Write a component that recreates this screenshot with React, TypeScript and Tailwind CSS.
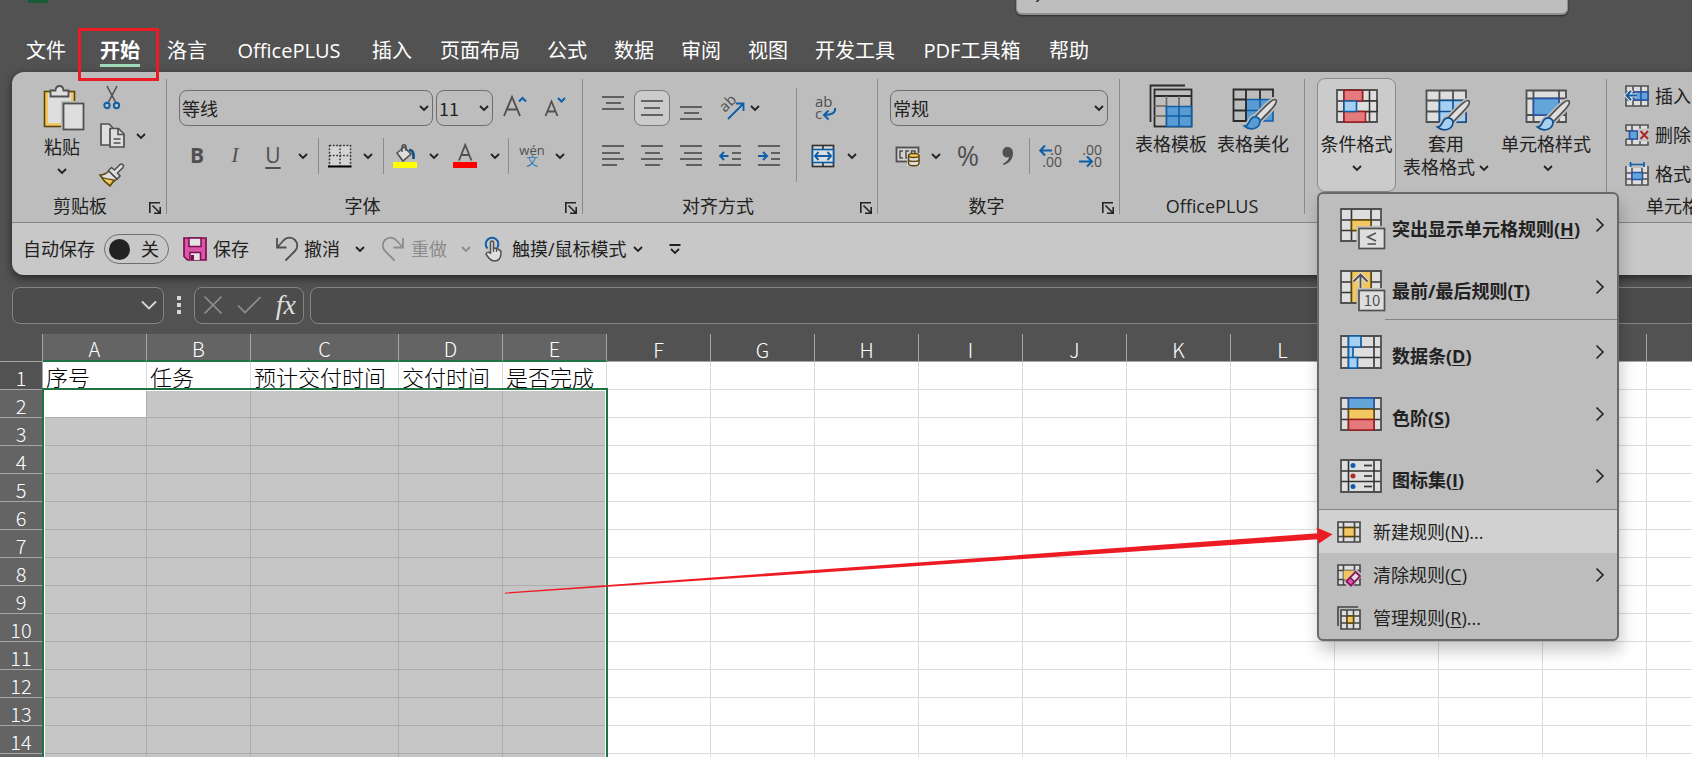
import React from "react";

type Kids = { children?: React.ReactNode };

const INK = "#505050";
const BLUE = "#0f5fa8";
const CELL = "#dedede";

/* ---------- small glyphs ---------- */

function Chevron({ color = "#222222" }: { color?: string }) {
  return (
    <svg width="10" height="8" viewBox="0 0 10 8" fill="none" className="shrink-0">
      <path d="M1 2l4 4 4-4" stroke={color} strokeWidth="1.8" />
    </svg>
  );
}

function Launcher() {
  return (
    <svg width="14" height="14" viewBox="0 0 14 14" fill="none" stroke="#222222" strokeWidth="1.6">
      <path d="M1.8 12V1.8H12M4.5 4.5l7 7M12.2 6v6.2H6" />
    </svg>
  );
}

function Svg({ w, h, children }: Kids & { w: number; h: number }) {
  return (
    <svg width={w} height={h} viewBox={`0 0 ${w} ${h}`} fill="none" className="shrink-0 overflow-visible">
      {children}
    </svg>
  );
}

function HLines({ rows, color = INK }: { rows: number[][]; color?: string }) {
  return (
    <>
      {rows.map(([y, a, b], i) => (
        <path key={i} d={`M${a} ${y}H${b}`} stroke={color} strokeWidth="1.7" />
      ))}
    </>
  );
}

function AlignIcon({ rows, arrow }: { rows: number[][]; arrow?: "left" | "right" }) {
  return (
    <Svg w={22} h={24}>
      <HLines rows={rows} />
      {arrow === "left" && <path d="M9.5 12H1.5M5 8L1.2 12 5 16" stroke={BLUE} strokeWidth="2" />}
      {arrow === "right" && <path d="M0 12h8.500M5 8l4 4-4 4" stroke={BLUE} strokeWidth="2" />}
    </Svg>
  );
}

/* ---------- ribbon icons ---------- */

function PasteIcon() {
  return (
    <Svg w={42} h={46}>
      <rect x="1.500" y="7.500" width="30" height="35" fill="#f2c661" stroke="#5c4508" strokeWidth="1.600" />
      <rect x="5" y="9" width="23" height="30" fill={CELL} />
      <path d="M7.500 12.500V6.500h5C13 .5 20 .5 20.500 6.500h5v6z" fill={CELL} stroke={INK} strokeWidth="1.800" />
      <rect x="18" y="17" width="24" height="29" fill="#bdbdbd" />
      <rect x="20.500" y="19.500" width="20" height="26" fill={CELL} stroke={INK} strokeWidth="1.800" />
    </Svg>
  );
}

function CutIcon() {
  return (
    <Svg w={18} h={24}>
      <path d="M4 1l9 17M14 1L5 18" stroke={INK} strokeWidth="1.600" />
      <circle cx="4" cy="20.500" r="2.700" stroke={BLUE} strokeWidth="1.900" />
      <circle cx="13.500" cy="20.500" r="2.700" stroke={BLUE} strokeWidth="1.900" />
    </Svg>
  );
}

function CopyIcon() {
  return (
    <Svg w={26} h={26}>
      <path d="M9 22H1V1h8l4 4" fill={CELL} stroke={INK} strokeWidth="1.700" />
      <path d="M10 5.500h8.500L24 11v13H10z" fill={CELL} stroke={INK} strokeWidth="1.700" />
      <path d="M18 5.500V11.500h6M13.500 16h7M13.500 20h7" stroke={INK} strokeWidth="1.600" />
    </Svg>
  );
}

function PainterIcon() {
  return (
    <Svg w={26} h={24}>
      <path d="M1 12c4 0 6-1 9-4l8 8c-3 2-5 4-7 7C7 20 4 17 1 12z" fill={CELL} stroke="#5c4508" strokeWidth="1.500" />
      <path d="M3 14.500c6 2 9 2 12 2.500l-4 5.500C7 20 5 18 3 14.500z" fill="#f2c661" stroke="#5c4508" strokeWidth="1.200" />
      <path d="M9.500 7.500l3-3 3 2.500L21 1.500c2-1.500 4.500 1 3 3L18.500 10l2.500 3-3 3z" fill={CELL} stroke={INK} strokeWidth="1.600" />
    </Svg>
  );
}

function BorderIcon() {
  return (
    <Svg w={24} h={24}>
      <rect x="2" y="2" width="20" height="19" fill={CELL} opacity=".7" />
      <path d="M1.500 1v21M12 1v21M22.500 1v21M1.500 1.500h21M1.500 11.500h21" stroke="#333333" strokeWidth="1.500" strokeDasharray="1.700 1.700" />
      <path d="M0 22.500h23.500" stroke="#000000" strokeWidth="2" />
    </Svg>
  );
}

function FillIcon() {
  return (
    <Svg w={24} h={24}>
      <path d="M4 9L11 3l7 7-8 7z" fill={CELL} stroke={INK} strokeWidth="1.600" />
      <path d="M9 8V3c0-3 4-3 4 0v4" stroke={INK} strokeWidth="1.500" />
      <path d="M16 6c4 0 5 3 4.500 9" stroke="#124f86" strokeWidth="2.600" />
      <rect y="18" width="24" height="6" fill="#ffff00" />
    </Svg>
  );
}

function FontColorIcon() {
  return (
    <Svg w={24} h={24}>
      <path d="M6 16.500L12.200 1 18.500 16.500M8.300 11h8" stroke={INK} strokeWidth="1.800" />
      <rect y="18" width="24" height="6" fill="#ff0000" />
    </Svg>
  );
}

function GrowIcon({ down = false }: { down?: boolean }) {
  return (
    <Svg w={24} h={24}>
      {down ? (
        <>
          <path d="M1.500 20L7.500 5.500l6 14.500M3.500 15.500h8" stroke={INK} strokeWidth="1.800" />
          <path d="M14 2l3.500 3.500L21 2" stroke={BLUE} strokeWidth="2" />
        </>
      ) : (
        <>
          <path d="M1 20L9 1l8 19M4 13.500h10" stroke={INK} strokeWidth="1.900" />
          <path d="M16 5.500L19.500 2 23 5.500" stroke={BLUE} strokeWidth="2" />
        </>
      )}
    </Svg>
  );
}

function OrientIcon() {
  return (
    <Svg w={26} h={26}>
      <text x="0" y="0" transform="translate(6 18) rotate(-45)" fontSize="15" fontFamily="Open Sans" fill={INK}>
        ab
      </text>
      <path d="M9 24L24 9M17 8.500h7.500V16" stroke={BLUE} strokeWidth="1.900" />
    </Svg>
  );
}

function WrapIcon() {
  return (
    <Svg w={24} h={26}>
      <text x="1" y="12" fontSize="15" fontFamily="Open Sans" fill={INK}>
        ab
      </text>
      <text x="1" y="24" fontSize="15" fontFamily="Open Sans" fill={INK}>
        c
      </text>
      <path d="M21 13c1 5-4 7-10 7M14.500 15.500L10 20l4.500 4.500" stroke={BLUE} strokeWidth="2" />
    </Svg>
  );
}

function MergeIcon() {
  return (
    <Svg w={24} h={24}>
      <rect x="1.500" y="1.500" width="21" height="21" fill={CELL} stroke="#333333" strokeWidth="1.700" />
      <path d="M12 1v5M12 18v5" stroke="#333333" strokeWidth="1.700" />
      <rect x="1.500" y="5.500" width="21" height="13" fill={CELL} stroke={BLUE} strokeWidth="1.700" />
      <path d="M4 12h16M7.500 8L4 12l3.500 4M16.500 8l3.500 4-3.500 4" stroke={BLUE} strokeWidth="1.900" />
    </Svg>
  );
}

function CurrencyIcon() {
  return (
    <Svg w={26} h={22}>
      <rect x="1.500" y="2.500" width="22" height="14" fill="#d2d2d2" stroke={INK} strokeWidth="1.800" />
      <path d="M8 6H5v7h3M14 13h-3V6h3M20 10V6h-3.500v4" stroke={INK} strokeWidth="1.500" />
      <path d="M12 8h13v13H12z" fill={CELL} />
      <path d="M13.500 10.500v8c0 3 10.500 3 10.500 0v-8" fill={CELL} stroke="#5c4508" strokeWidth="1.500" />
      <ellipse cx="18.800" cy="10.500" rx="5.300" ry="2" fill="#f2c661" stroke="#5c4508" strokeWidth="1.400" />
      <path d="M13.500 14.500c0 2.500 10.500 2.500 10.500 0" stroke="#5c4508" strokeWidth="1.400" />
    </Svg>
  );
}

function CommaIcon() {
  return (
    <Svg w={14} h={20}>
      <path d="M6.500 1C10 1 12 3.500 12 7.500c0 5-3.500 10-9.500 11.500l-.500-1.500c3-1 5.500-3.500 6-6.500C4 12.500 1.500 10 1.500 6.500 1.500 3 3.500 1 6.500 1z" fill={INK} />
    </Svg>
  );
}

function DecimalIcon({ more = false }: { more?: boolean }) {
  return (
    <Svg w={24} h={26}>
      <g fontSize="14" fontFamily="Open Sans" fill={INK} textAnchor="end">
        <text x="23" y="11.500">{more ? ".0" : ".00"}</text>
        <text x="23" y="24">{more ? ".00" : ".0"}</text>
      </g>
      {more ? (
        <path d="M13 7.500H1.500M6 2.500L1.200 7.500 6 12.500" stroke={BLUE} strokeWidth="2" />
      ) : (
        <path d="M0 18.500h12.500M8 13.500l5 5-5 5" stroke={BLUE} strokeWidth="2" />
      )}
    </Svg>
  );
}

function Brush({ tip = "#a6d0f2", edge = "#0f4f8c" }: { tip?: string; edge?: string }) {
  const handle = "M44 12c-2-2-7 2-21 17l4.500 4.500C41 20 46 15 44 12z";
  const head = "M12.500 38c5 0 4-6 8-8.500 4-2 8 1 7.500 4.500-1 7-10 9-15.500 4z";
  return (
    <>
      <path d={handle} stroke="#bdbdbd" strokeWidth="5" />
      <path d={head} stroke="#bdbdbd" strokeWidth="5" />
      <path d={handle} fill={CELL} stroke={INK} strokeWidth="1.700" />
      <path d={head} fill={tip} stroke={edge} strokeWidth="1.700" />
    </>
  );
}

function TemplateIcon() {
  return (
    <Svg w={44} h={44}>
      <path d="M1.500 38V1.500H36" stroke="#2b2b2b" strokeWidth="1.800" />
      <rect x="5.500" y="5.500" width="37" height="37" stroke="#2b2b2b" strokeWidth="1.800" />
      <path d="M5 12h37" stroke="#2b2b2b" strokeWidth="1.800" />
      <path d="M17.500 12v10M30 12v10M5 22h13M5 32h13M17.500 22v20" stroke="#6b635c" strokeWidth="1.600" />
      <path d="M17.500 22.500h25v20h-25zM30 22v20M17 32h25" fill="#5a9bd2" stroke="#0f5fa8" strokeWidth="1.600" />
    </Svg>
  );
}

function BeautifyIcon() {
  return (
    <Svg w={46} h={42}>
      <rect x="14" y="11" width="27" height="22" fill="#5a9bd2" />
      <path d="M14.500 11.500H41M14 22.500h27M28 11v22M41 11v22H14V11" stroke="#0f5fa8" strokeWidth="1.600" />
      <path d="M41 9V1.500H1.500V33H14V1.500M28 1v10M1 11.500h13M1 22.500h13" stroke="#2b2b2b" strokeWidth="1.800" />
      <Brush tip="#5a9bd2" edge="#0f5fa8" />
    </Svg>
  );
}

function FormatTableIcon() {
  return (
    <Svg w={46} h={42}>
      <path d="M1.500 1.500H41V33H1.500zM14.500 1v32M28 1v32M1 11.500h40M1 22.500h40" fill={CELL} stroke={INK} strokeWidth="1.800" />
      <path d="M14.500 11.500H41V33H14.500zM28 11v22M14 22.500h27" fill="#a6d0f2" stroke="#0f4f8c" strokeWidth="1.600" />
      <Brush />
    </Svg>
  );
}

function CellStyleIcon() {
  return (
    <Svg w={46} h={42}>
      <path d="M1.500 1.500H41V33H1.500zM8.500 1v32M34 1v32M1 9.500h40M1 26h40" fill={CELL} stroke={INK} strokeWidth="1.800" />
      <rect x="8.500" y="9.500" width="25.500" height="16.500" fill="#62a5d9" stroke="#2b50a8" strokeWidth="1.600" />
      <Brush />
    </Svg>
  );
}

function Frame({ v, children }: Kids & { v: number[] }) {
  return (
    <>
      <rect x="1" y="1" width="40" height="32" fill={CELL} />
      <path d={`${v.map((x) => `M${x} 1v32`).join("")}M1 12h40M1 22.500h40`} stroke="#333333" strokeWidth="1.600" />
      {children}
      <path d="M1 1h40v32H1z" stroke={INK} strokeWidth="1.800" />
    </>
  );
}

function ConditionalIcon() {
  return (
    <Svg w={42} h={42}>
      <Frame v={[8, 26.5, 33.5]} />
      <path d="M8 12h33v10.500H8z" fill={CELL} stroke="#333333" strokeWidth="1.500" />
      <path d="M33.500 12v10.500" stroke="#333333" strokeWidth="1.500" />
      <path d="M8 1.200h18.500V12H8zM8 22.500h21.500V33H8z" fill="#e47a7c" stroke="#9c1c20" strokeWidth="1.500" />
      <path d="M8 12h12.500v10.500H8z" fill="#a6d0f2" stroke="#0f5fa8" strokeWidth="1.600" />
    </Svg>
  );
}

function Badge({ children }: Kids) {
  return (
    <>
      <rect x="16.500" y="18" width="30" height="24" fill="#bdbdbd" />
      <rect x="19" y="20.500" width="25.500" height="20" fill={CELL} stroke={INK} strokeWidth="1.700" />
      {children}
    </>
  );
}

function HighlightIcon() {
  return (
    <Svg w={46} h={42}>
      <Frame v={[11.5, 31]}>
        <path d="M11.500 12H31v10.500H11.500z" fill="#f2c661" stroke="#5c4508" strokeWidth="1.500" />
      </Frame>
      <Badge>
        <path d="M36 25l-8.500 4 8.500 4M27.500 36H36" stroke={INK} strokeWidth="1.500" />
      </Badge>
    </Svg>
  );
}

function TopIcon() {
  return (
    <Svg w={46} h={42}>
      <Frame v={[11.5, 31]}>
        <path d="M11.500 1H31v32H11.500z" fill="#f2c661" stroke="#5c4508" strokeWidth="1.500" />
        <path d="M20.500 21V5M13.500 11.500l7-7 7 7" stroke="#dedede" strokeWidth="4" />
        <path d="M20.500 21V5M13.500 11.500l7-7 7 7" stroke={INK} strokeWidth="1.800" />
      </Frame>
      <Badge>
        <text x="32" y="36" textAnchor="middle" fontSize="15" fontWeight="400" fontFamily="Noto Sans CJK SC" fill={INK}>
          10
        </text>
      </Badge>
    </Svg>
  );
}

function DataBarIcon() {
  return (
    <Svg w={42} h={34}>
      <Frame v={[8.5, 34]} />
      <path d="M8.500 1H21v11H8.500zM8.500 12h4.500v10.500H8.500zM8.500 22.500h9V33h-9z" fill="#a6d0f2" stroke="#0f5fa8" strokeWidth="1.700" />
    </Svg>
  );
}

function ScaleIcon() {
  return (
    <Svg w={42} h={34}>
      <Frame v={[8.5, 34]} />
      <path d="M8.500 1H34v11H8.500z" fill="#62a5d9" stroke="#2b50a8" strokeWidth="1.600" />
      <path d="M8.500 12H34v10.500H8.500z" fill="#f2c661" stroke="#5c4508" strokeWidth="1.400" />
      <path d="M8.500 22.500H34V33H8.500z" fill="#e47a7c" stroke="#9c1c20" strokeWidth="1.600" />
    </Svg>
  );
}

function IconSetIcon() {
  return (
    <Svg w={42} h={34}>
      <Frame v={[8.5, 34]} />
      <circle cx="13" cy="6.500" r="2.500" fill={BLUE} />
      <circle cx="13" cy="17" r="2.500" fill="#a82a2a" />
      <circle cx="13" cy="27.500" r="2.500" fill={BLUE} />
      <HLines rows={[[6.5, 24, 32], [17, 24, 32], [27.5, 24, 32]]} color="#333333" />
    </Svg>
  );
}

function NewRuleIcon() {
  return (
    <Svg w={24} h={22}>
      <path d="M1 1h22v20H1zM6.500 1v20M17.500 1v20M1 6.500h22M1 15.500h22" fill={CELL} stroke="#444444" strokeWidth="1.600" />
      <path d="M6.500 6.500h11v9h-11z" fill="#f2c661" stroke="#5c4508" strokeWidth="1.500" />
    </Svg>
  );
}

function ClearRuleIcon() {
  return (
    <Svg w={26} h={24}>
      <path d="M1 2h22v20H1zM6.500 2v20M17.500 2v20M1 7.500h22M1 16.500h22" fill={CELL} stroke="#444444" strokeWidth="1.600" />
      <path d="M6.500 7.500h11v9h-11z" fill="#f2c661" />
      <path d="M19 6l7 6-11 12H9V17z" fill="#bdbdbd" />
      <path d="M18.500 9l4.500 4-9 9.500-4.500-4z" fill={CELL} stroke="#8a0f5c" strokeWidth="1.700" />
      <path d="M13 14.500l4.500 4-3.500 4-4.500-4z" fill="#d957a8" stroke="#8a0f5c" strokeWidth="1.500" />
    </Svg>
  );
}

function ManageRuleIcon() {
  return (
    <Svg w={24} h={24}>
      <path d="M1 20V1h20" stroke="#444444" strokeWidth="1.600" />
      <path d="M4 4h19v19H4zM10 4v19M16.500 4v19M4 10h19M4 17h19" fill={CELL} stroke="#444444" strokeWidth="1.600" />
      <path d="M10 10h6.500v7H10z" fill="#f2c661" stroke="#5c4508" strokeWidth="1.500" />
    </Svg>
  );
}

function InsertIcon() {
  return (
    <Svg w={24} h={24}>
      <path d="M1 2h22v20H1zM8 2v20M16 2v20M1 8h22M1 16h22" fill={CELL} stroke={INK} strokeWidth="1.600" />
      <path d="M9 8h14v8H9zM16 8v8" fill="#62a5d9" stroke="#2b50a8" strokeWidth="1.600" />
      <path d="M12 11.500H2M7 6l-5.500 5.500L7 17" stroke={CELL} strokeWidth="4" />
      <path d="M12 11.500H2M6 7l-4.500 4.500L6 16" stroke={BLUE} strokeWidth="1.900" />
    </Svg>
  );
}

function DeleteIcon() {
  return (
    <Svg w={24} h={24}>
      <path d="M1 8V2h22v5M7 2v6M15 2v5M1 8h8M1 16v6h22v-4M7 16v6M15 16v6M1 16h8" fill={CELL} stroke={INK} strokeWidth="1.600" />
      <path d="M4.500 8h8v8h-8z" fill="#62a5d9" stroke="#2b50a8" strokeWidth="1.600" />
      <path d="M13 5.500h11v13H13z" fill="#c6c6c6" />
      <path d="M15.500 8l7.500 8M23 8l-7.500 8" stroke="#a82a2a" strokeWidth="2" />
    </Svg>
  );
}

function FormatIcon() {
  return (
    <Svg w={24} h={24}>
      <path d="M1 4v19h22V4M1 11h22M1 17h22M7 6v17M17 6v17" fill={CELL} stroke={INK} strokeWidth="1.600" />
      <path d="M6 0h12v6H6z" fill="#bdbdbd" />
      <path d="M5.500 0v5M19 0v5M5.500 2.500H19" stroke={BLUE} strokeWidth="1.700" />
      <path d="M7 10.500h10.500v7H7z" fill="#62a5d9" stroke="#2b50a8" strokeWidth="1.500" />
    </Svg>
  );
}

function SaveIcon() {
  return (
    <Svg w={24} h={24}>
      <path d="M1 1h22v22H4.500L1 19.500z" fill="#d957a8" stroke="#7d0d50" strokeWidth="1.700" />
      <path d="M6 1h12v8.500H6zM7 23v-7.500h10.500V23" fill="#e4e4e4" stroke="#7d0d50" strokeWidth="1.500" />
      <path d="M9.500 18v5" stroke="#7d0d50" strokeWidth="3" />
    </Svg>
  );
}

function UndoIcon({ redo = false }: { redo?: boolean }) {
  return (
    <Svg w={24} h={26}>
      <g transform={redo ? "translate(24 0) scale(-1 1)" : undefined} stroke={redo ? "#8c8c8c" : INK} strokeWidth="1.800">
        <path d="M2 2v9.500h9.500M2.500 11L8 5c4-4.500 9-4 12-1s3 8 0 11l-9.500 9.500" />
      </g>
    </Svg>
  );
}

function TouchIcon() {
  return (
    <Svg w={18} h={26}>
      <path d="M3.500 12.500A6.300 6.300 0 1 1 13 12" stroke="#0f5fa8" strokeWidth="2" />
      <path
        d="M6.500 17V6.500c0-2 3-2 3 0V12c2-.500 2.500.500 3 1 2-.500 2.500.500 2.500 1 2 0 2 1 2 2.500 0 5-1.500 8.500-6.500 8.500-4 0-6-3-8.500-7 .500-2 2.500-2 4.500-1z"
        fill={CELL}
        stroke={INK}
        strokeWidth="1.500"
      />
      <path d="M9.500 12v4M12.500 13v3" stroke={INK} strokeWidth="1.300" />
    </Svg>
  );
}

/* ---------- ribbon building blocks ---------- */

function Tool({ label, width = "w-9", children }: Kids & { label: string; width?: string }) {
  return (
    <button aria-label={label} className={`flex h-9 shrink-0 items-center justify-center ${width}`}>
      {children}
    </button>
  );
}

function More({ width = "w-[22px]", label }: { width?: string; label: string }) {
  return (
    <Tool label={label} width={width}>
      <Chevron />
    </Tool>
  );
}

function Divider() {
  return <div className="mx-[3px] h-9 w-px shrink-0 bg-[#8a8a8a]" />;
}

function Group({
  title,
  width,
  launcher = true,
  wide = false,
  children,
}: Kids & { title: string; width: string; launcher?: boolean; wide?: boolean }) {
  return (
    <>
      <section aria-label={title} className={`flex shrink-0 flex-col ${width}`}>
        <div className="h-[118px]">{children}</div>
        <div className="flex h-8 items-center">
          <h2 className={`flex-1 text-center text-[18px] leading-6 ${wide ? "pr-1.5" : ""}`}>{title}</h2>
          {launcher && (
            <button aria-label={`${title}设置`} className="mr-1 mt-1">
              <Launcher />
            </button>
          )}
        </div>
      </section>
      <div className="mt-[7px] h-[135px] w-px shrink-0 bg-[#8a8a8a]" />
    </>
  );
}

function Combo({ label, value, width, pad = "pl-0.5" }: { label: string; value: string; width: string; pad?: string }) {
  return (
    <div className={`grid h-9 shrink-0 items-center ${width}`}>
      <select
        aria-label={label}
        defaultValue={value}
        className={`col-start-1 row-start-1 h-9 w-full appearance-none rounded-lg border border-[#6e6e6e] bg-transparent font-['Noto_Sans_CJK_SC',sans-serif] text-[18px] text-[#222222] ${pad}`}
      >
        <option>{value}</option>
      </select>
      <span className="pointer-events-none col-start-1 row-start-1 mr-1 justify-self-end">
        <Chevron />
      </span>
    </div>
  );
}

function BigButton({ icon, width, iconBox, children }: Kids & { icon: React.ReactNode; width: string; iconBox: string }) {
  return (
    <button className={`flex shrink-0 flex-col items-center self-start text-[18px] leading-[23px] ${width}`}>
      <span className={`flex items-start justify-center ${iconBox}`}>{icon}</span>
      {children}
    </button>
  );
}

/* ---------- conditional formatting menu ---------- */

function MenuArrow() {
  return (
    <svg width="10" height="16" viewBox="0 0 10 16" fill="none" stroke="#222222" strokeWidth="1.600">
      <path d="M1.500 1.500L8 8l-6.500 6.500" />
    </svg>
  );
}

function Label({ text, hot, dots = false }: { text: string; hot: string; dots?: boolean }) {
  return (
    <>
      {text}(<u className="underline-offset-2">{hot}</u>){dots && "..."}
    </>
  );
}

const BIG_ITEMS = [
  { text: "突出显示单元格规则", hot: "H", icon: <HighlightIcon /> },
  { text: "最前/最后规则", hot: "T", icon: <TopIcon /> },
  { text: "数据条", hot: "D", icon: <DataBarIcon /> },
  { text: "色阶", hot: "S", icon: <ScaleIcon /> },
  { text: "图标集", hot: "I", icon: <IconSetIcon /> },
];

const SMALL_ITEMS = [
  { text: "新建规则", hot: "N", icon: <NewRuleIcon />, dots: true, active: true },
  { text: "清除规则", hot: "C", icon: <ClearRuleIcon />, arrow: true },
  { text: "管理规则", hot: "R", icon: <ManageRuleIcon />, dots: true },
];

function RulesMenu() {
  return (
    <div
      role="menu"
      className="absolute left-0 top-full w-[302px] rounded-md border-2 border-[#696969] bg-[#bdbdbd] text-[18px] text-[#222222] shadow-[2px_10px_16px_rgba(0,0,0,0.22)]"
    >
      {BIG_ITEMS.map((item, i) => (
        <React.Fragment key={item.hot}>
          <button role="menuitem" className="flex h-[62px] w-full items-center pl-[21px] pr-3 text-left font-bold">
            <span className="w-[52px] self-start pt-3.5">{item.icon}</span>
            <span className="flex-1 whitespace-nowrap pt-2 leading-6">
              <Label text={item.text} hot={item.hot} />
            </span>
            <MenuArrow />
          </button>
          {i === 1 && <div className="mb-px mt-px ml-[66px] h-px bg-[#858585]" />}
        </React.Fragment>
      ))}
      <div className="mt-0.5 h-px bg-[#858585]" />
      {SMALL_ITEMS.map((item) => (
        <button
          key={item.hot}
          role="menuitem"
          className={`flex h-[43px] w-full items-center pl-[18px] pr-3 text-left ${item.active ? "bg-[#d1d1d1]" : ""}`}
        >
          <span className="w-9">{item.icon}</span>
          <span className="flex-1 leading-6">
            <Label text={item.text} hot={item.hot} dots={item.dots} />
          </span>
          {item.arrow && <MenuArrow />}
        </button>
      ))}
    </div>
  );
}

/* ---------- page sections ---------- */

const TABS = [
  { text: "文件", width: "w-[68px]" },
  { text: "开始", width: "w-[80px]", active: true },
  { text: "洛言", width: "w-[54px]" },
  { text: "OfficePLUS", width: "w-[150px]" },
  { text: "插入", width: "w-[56px]" },
  { text: "页面布局", width: "w-[120px]" },
  { text: "公式", width: "w-[54px]" },
  { text: "数据", width: "w-[80px]" },
  { text: "审阅", width: "w-[54px]" },
  { text: "视图", width: "w-[80px]" },
  { text: "开发工具", width: "w-[94px]" },
  { text: "PDF工具箱", width: "w-[140px]" },
  { text: "帮助", width: "w-[54px]" },
];

function TopBar() {
  return (
    <header className="text-white">
      <div className="flex h-[26px] items-start">
        <div className="ml-7 h-[3px] w-5 bg-[#185c37]" />
        <div className="flex-1" />
        <div className="mr-[124px] grid w-[552px]">
          <input
            aria-label="搜索"
            className="col-start-1 row-start-1 h-[15px] w-full rounded-b-md border-x border-b-2 border-[#8f8f8f] bg-[#bdbdbd] shadow-[0_1px_2px_rgba(0,0,0,0.5)]"
          />
          <svg width="4" height="2" viewBox="0 0 4 2" className="pointer-events-none col-start-1 row-start-1 ml-5">
            <path d="M0 2L3 0" stroke="#333333" strokeWidth="1.500" />
          </svg>
        </div>
      </div>
      <nav className="flex h-[46px] items-stretch pl-3 text-[20px] leading-7">
        {TABS.map((tab) => (
          <button key={tab.text} className={`relative flex shrink-0 justify-center whitespace-nowrap pt-[11px] ${tab.width}`}>
            {tab.active ? (
              <>
                <span className="h-[30px] border-b-[3px] border-[#9fd9b8] font-bold">{tab.text}</span>
                <span className="absolute -bottom-[9px] left-0 z-30 h-[53px] w-[81px] -translate-x-0.5 border-[3px] border-[#ed1c24]" />
              </>
            ) : (
              tab.text
            )}
          </button>
        ))}
      </nav>
    </header>
  );
}

function Ribbon() {
  return (
    <div className="flex h-[150px] rounded-tl-xl bg-[#bdbdbd]">
      <Group title="剪贴板" width="w-[154px]">
        <div className="flex pl-[27px] pt-3">
          <button className="flex w-[46px] flex-col items-center text-[18px] leading-6">
            <span className="h-[46px] self-end">
              <PasteIcon />
            </span>
            <span className="mb-2 mt-[5px] whitespace-nowrap">粘贴</span>
            <Chevron />
          </button>
          <div className="ml-3 flex flex-col gap-3.5">
            <button aria-label="剪切" className="flex h-[25px] w-[30px] items-center justify-center">
              <CutIcon />
            </button>
            <button aria-label="复制" className="flex h-[25px] items-center gap-2.5 pl-[3px]">
              <CopyIcon />
              <Chevron />
            </button>
            <button aria-label="格式刷" className="flex h-[25px] w-[30px] items-center justify-center">
              <PainterIcon />
            </button>
          </div>
        </div>
      </Group>

      <Group title="字体" width="w-[415px]" wide>
        <div className="flex flex-col gap-3 pl-3 pt-[18px]">
          <div className="flex">
            <Combo label="字体名称" value="等线" width="w-[254px]" />
            <div className="w-[3px]" />
            <Combo label="字号" value="11" width="w-[57px]" />
            <Tool label="增大字号" width="w-11">
              <GrowIcon />
            </Tool>
            <Tool label="减小字号" width="w-[38px]">
              <GrowIcon down />
            </Tool>
          </div>
          <div className="flex text-[21px] text-[#505050]">
            <Tool label="加粗">
              <b>B</b>
            </Tool>
            <Tool label="倾斜" width="w-10">
              <i className="font-['Liberation_Serif',serif]">I</i>
            </Tool>
            <Tool label="下划线">
              <u className="underline-offset-4">U</u>
            </Tool>
            <More label="下划线选项" width="w-6" />
            <Divider />
            <Tool label="边框">
              <BorderIcon />
            </Tool>
            <More label="边框选项" width="w-5" />
            <div className="w-0.5" />
            <Divider />
            <Tool label="填充颜色">
              <FillIcon />
            </Tool>
            <More label="填充颜色选项" />
            <Tool label="字体颜色" width="w-10">
              <FontColorIcon />
            </Tool>
            <More label="字体颜色选项" width="w-5" />
            <Divider />
            <Tool label="拼音" width="w-10">
              <span className="flex flex-col items-center text-[13px] leading-3">
                wén<span className="text-[12px] text-[#2a7ab8]">文</span>
              </span>
            </Tool>
            <More label="拼音选项" width="w-4" />
          </div>
        </div>
      </Group>

      <Group title="对齐方式" width="w-[294px]" wide>
        <div className="flex pl-3">
          <div className="flex w-[201px] flex-col gap-3 pt-[18px]">
            <div className="flex gap-[3px]">
              <Tool label="顶端对齐">
                <AlignIcon rows={[[1, 0, 22], [7, 4, 19], [13, 0, 22]]} />
              </Tool>
              <button aria-label="垂直居中" className="flex size-9 items-center justify-center rounded-lg border border-[#7a7a7a] bg-[#cbcbcb]">
                <AlignIcon rows={[[5, 0, 22], [12, 3, 19], [19, 0, 22]]} />
              </button>
              <Tool label="底端对齐">
                <AlignIcon rows={[[11, 0, 22], [17, 4, 19], [23, 0, 22]]} />
              </Tool>
              <Tool label="方向" width="w-[50px]">
                <span className="flex w-9 justify-center">
                  <OrientIcon />
                </span>
                <Chevron />
              </Tool>
            </div>
            <div className="flex gap-[3px]">
              <Tool label="左对齐">
                <AlignIcon rows={[[2, 0, 22], [9, 0, 18], [15, 0, 22], [21, 0, 15]]} />
              </Tool>
              <Tool label="居中">
                <AlignIcon rows={[[2, 0, 22], [9, 4, 19], [15, 0, 22], [21, 4, 19]]} />
              </Tool>
              <Tool label="右对齐">
                <AlignIcon rows={[[2, 0, 22], [9, 4, 22], [15, 0, 22], [21, 6, 22]]} />
              </Tool>
              <Tool label="减少缩进量">
                <AlignIcon rows={[[2, 0, 22], [9, 13, 22], [15, 13, 22], [21, 0, 22]]} arrow="left" />
              </Tool>
              <Tool label="增加缩进量">
                <AlignIcon rows={[[2, 0, 22], [9, 13, 22], [15, 13, 22], [21, 0, 22]]} arrow="right" />
              </Tool>
            </div>
          </div>
          <div className="mt-4 h-[94px] w-px bg-[#8a8a8a]" />
          <div className="flex flex-col gap-3 pl-2 pt-[18px]">
            <Tool label="自动换行" width="w-[42px]">
              <WrapIcon />
            </Tool>
            <div className="flex">
              <Tool label="合并后居中">
                <MergeIcon />
              </Tool>
              <More label="合并选项" />
            </div>
          </div>
        </div>
      </Group>

      <Group title="数字" width="w-[241px]" wide>
        <div className="flex flex-col gap-3 pl-3 pt-[18px]">
          <Combo label="数字格式" value="常规" width="w-[218px]" />
          <div className="flex text-[27px] text-[#505050]">
            <Tool label="会计数字格式">
              <CurrencyIcon />
            </Tool>
            <More label="会计数字格式选项" width="w-5" />
            <Tool label="百分比样式" width="w-11">
              %
            </Tool>
            <Tool label="千位分隔样式">
              <CommaIcon />
            </Tool>
            <Divider />
            <Tool label="增加小数位数">
              <DecimalIcon more />
            </Tool>
            <Tool label="减少小数位数" width="w-11">
              <DecimalIcon />
            </Tool>
          </div>
        </div>
      </Group>

      <Group title="OfficePLUS" width="w-[184px]" launcher={false}>
        <div className="flex pl-2.5 pt-3">
          <BigButton width="w-[82px]" iconBox="h-[49px]" icon={<TemplateIcon />}>
            表格模板
          </BigButton>
          <BigButton width="w-[82px]" iconBox="h-[49px] pt-1 pl-1" icon={<BeautifyIcon />}>
            表格美化
          </BigButton>
        </div>
      </Group>

      <Group title="" width="w-[301px]" launcher={false}>
        <div className="flex items-start pl-3 pt-1.5">
          <div className="relative z-20">
            <button
              aria-expanded="true"
              className="flex h-[114px] w-[79px] flex-col items-center whitespace-nowrap rounded-lg border border-[#8a8a8a] bg-[#cbcbcb] pt-2.5 text-[18px] leading-[23px]"
            >
              <span className="h-11">
                <ConditionalIcon />
              </span>
              条件格式
              <span className="flex h-[23px] items-center">
                <Chevron />
              </span>
            </button>
            <RulesMenu />
          </div>
          <div className="flex pt-[11px]">
            <BigButton width="w-[100px]" iconBox="h-11 pl-1" icon={<FormatTableIcon />}>
              <span>套用</span>
              <span className="flex items-center gap-1 whitespace-nowrap">
                表格格式
                <Chevron />
              </span>
            </BigButton>
            <BigButton width="w-[100px]" iconBox="h-11 pl-1" icon={<CellStyleIcon />}>
              <span>单元格样式</span>
              <span className="flex h-[23px] items-center pl-1">
                <Chevron />
              </span>
            </BigButton>
          </div>
        </div>
      </Group>

      <Group title="单元格" width="w-[132px]" launcher={false}>
        <div className="flex flex-col gap-[15px] pl-[18px] pt-3 text-[18px] leading-6">
          <button className="flex items-center gap-1.5">
            <InsertIcon />
            插入
          </button>
          <button className="flex items-center gap-1.5">
            <DeleteIcon />
            删除
          </button>
          <button className="flex items-center gap-1.5">
            <FormatIcon />
            格式
          </button>
        </div>
      </Group>
    </div>
  );
}

function QuickAccess() {
  return (
    <div className="flex h-[53px] items-center whitespace-nowrap rounded-bl-xl border-t border-[#858585] bg-[#c8c8c8] pl-[11px] text-[18px] leading-6">
      <label htmlFor="autosave">自动保存</label>
      <div className="ml-[9px] grid items-center">
        <input
          id="autosave"
          type="checkbox"
          role="switch"
          className="col-start-1 row-start-1 h-[30px] w-[65px] appearance-none rounded-full border border-[#6e6e6e]"
        />
        <span className="pointer-events-none col-start-1 row-start-1 flex items-center justify-between pl-[5px] pr-2.5">
          <span className="size-[21px] rounded-full bg-[#222222]" />
          关
        </span>
      </div>
      <button className="ml-3.5 flex items-center gap-1.5">
        <SaveIcon />
        保存
      </button>
      <button className="ml-[26px] flex items-center gap-[5px]">
        <UndoIcon />
        撤消
      </button>
      <button aria-label="撤消选项" className="ml-[15px]">
        <Chevron />
      </button>
      <button disabled className="ml-4 flex items-center gap-1.5 text-[#8c8c8c]">
        <UndoIcon redo />
        重做
      </button>
      <button disabled aria-label="重做选项" className="ml-3.5">
        <Chevron color="#8c8c8c" />
      </button>
      <button className="ml-[13px] flex items-center">
        <TouchIcon />
        <span className="ml-2.5 mr-1.5">触摸/鼠标模式</span>
        <Chevron />
      </button>
      <button aria-label="自定义快速访问工具栏" className="ml-[26px]">
        <Svg w={12} h={12}>
          <path d="M.500 2h11M2 6l4 4 4-4" stroke="#222222" strokeWidth="1.800" />
        </Svg>
      </button>
    </div>
  );
}

function FormulaBar() {
  return (
    <div className="flex h-[59px] items-center pb-px pl-3 pt-0.5">
      <div className="grid w-[152px] shrink-0 items-center">
        <select aria-label="名称框" className="col-start-1 row-start-1 h-[37px] w-full appearance-none rounded-lg border border-[#858585] bg-[#4c4c4c]" />
        <span className="pointer-events-none col-start-1 row-start-1 mr-[7px] justify-self-end">
          <Svg w={16} h={10}>
            <path d="M1 1.500l7 7 7-7" stroke="#d6d6d6" strokeWidth="1.800" />
          </Svg>
        </span>
      </div>
      <div className="mx-[13px] flex w-1 shrink-0 flex-col gap-[3px]">
        <span className="size-1 bg-[#d6d6d6]" />
        <span className="size-1 bg-[#d6d6d6]" />
        <span className="size-1 bg-[#d6d6d6]" />
      </div>
      <div className="flex h-[37px] w-[110px] shrink-0 items-center justify-between rounded-lg border border-[#858585] bg-[#4c4c4c] pl-[9px] pr-[7px]">
        <button aria-label="取消">
          <Svg w={18} h={18}>
            <path d="M.500 .500l17 17M17.500 .500l-17 17" stroke="#8f8f8f" strokeWidth="1.700" />
          </Svg>
        </button>
        <button aria-label="输入">
          <Svg w={24} h={18}>
            <path d="M1 9.500l7 7L23.500 1" stroke="#8f8f8f" strokeWidth="1.700" />
          </Svg>
        </button>
        <button aria-label="插入函数" className="font-['Liberation_Serif',serif] text-[28px] italic leading-7 text-[#dedede]">
          fx
        </button>
      </div>
      <input
        aria-label="编辑栏"
        className="-mr-3 ml-1.5 h-[37px] min-w-0 flex-1 rounded-lg border border-[#858585] bg-[#4c4c4c] px-2 text-white"
      />
    </div>
  );
}

const COLUMNS = ["A", "B", "C", "D", "E", "F", "G", "H", "I", "J", "K", "L", "M", "N", "O", "P"];
const FIRST_ROW = ["序号", "任务", "预计交付时间", "交付时间", "是否完成"];
const ROWS = Array.from({ length: 15 }, (_, i) => i + 1);

function Sheet() {
  return (
    <main className="relative font-['Noto_Sans_CJK_SC',sans-serif] font-light">
      <table className="w-[1751px] table-fixed border-separate border-spacing-0 bg-white">
        <colgroup>
          <col className="w-[43px]" />
          {COLUMNS.map((c) => (
            <col key={c} className={c === "C" ? "w-[148px]" : "w-[104px]"} />
          ))}
        </colgroup>
        <thead>
          <tr className="h-7 text-[20px] leading-[22px] text-white">
            <td className="border-b border-r border-[#a6a6a6] bg-[#525252]" />
            {COLUMNS.map((c, i) => (
              <th
                key={c}
                scope="col"
                className={`h-7 border-r border-r-[#a6a6a6] p-0 pt-1 text-center font-light ${
                  i < 5 ? "border-b-2 border-b-[#217346] bg-[#646464]" : "border-b border-b-[#a6a6a6] bg-[#525252]"
                }`}
              >
                {c}
              </th>
            ))}
          </tr>
        </thead>
        <tbody>
          {ROWS.map((r) => (
            <tr key={r} className="h-7">
              <th
                scope="row"
                className={`h-7 border-b border-r border-[#a6a6a6] p-0 pt-1 text-center text-[20px] font-light leading-[22px] text-white ${
                  r > 1 ? "bg-[#646464]" : "bg-[#525252]"
                }`}
              >
                {r}
              </th>
              {COLUMNS.map((c, i) => {
                const selected = r > 1 && i < 5;
                const first = r === 2 && i === 0;
                return (
                  <td
                    key={c}
                    className={`h-7 whitespace-nowrap border-b border-r p-0 pl-[3px] text-[22px] leading-[22px] text-black ${
                      selected ? "border-[#adadad]" : "border-[#dcdcdc]"
                    } ${selected && !first ? "bg-[#c6c6c6]" : ""}`}
                  >
                    {r === 1 ? FIRST_ROW[i] : null}
                  </td>
                );
              })}
            </tr>
          ))}
        </tbody>
      </table>
      <div className="pointer-events-none absolute bottom-0 left-[42px] top-[54px] w-[566px] border-x-2 border-t-2 border-[#217346] shadow-[inset_0_0_0_1px_#ffffff]" />
    </main>
  );
}

function PointerArrow() {
  return (
    <svg
      width="830"
      height="70"
      viewBox="0 0 830 70"
      className="pointer-events-none absolute left-[504px] top-[525px] z-30"
      aria-hidden="true"
    >
      <path d="M1 67.500L814 8.300 812.500 2.500 828.500 9.300 815 18.500 813.500 14.200 1 68.700z" fill="#ed1c24" />
    </svg>
  );
}

export default function App() {
  return (
    <div className="relative h-screen overflow-hidden bg-[#525252] font-['Open_Sans','Noto_Sans_CJK_SC',sans-serif] text-[#222222]">
      <TopBar />
      <div className="relative z-20 ml-3 rounded-l-xl shadow-[0_3px_8px_rgba(0,0,0,0.55)]">
        <Ribbon />
        <QuickAccess />
      </div>
      <FormulaBar />
      <Sheet />
      <PointerArrow />
    </div>
  );
}
